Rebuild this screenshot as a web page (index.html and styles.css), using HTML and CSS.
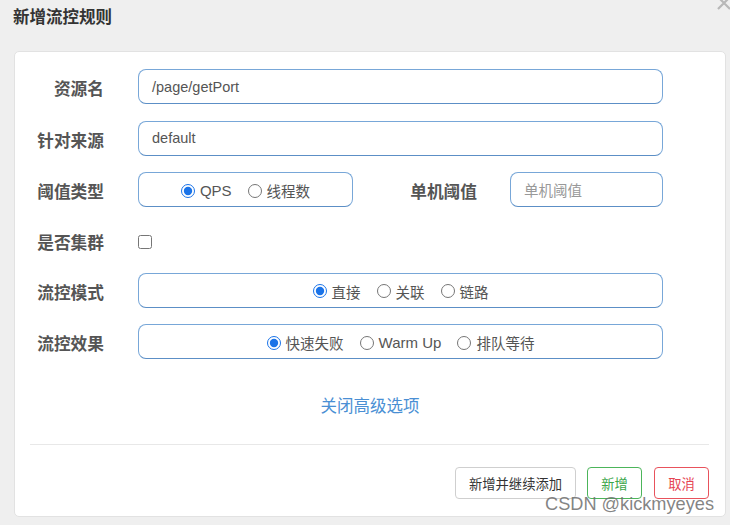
FILE: index.html
```html
<!DOCTYPE html>
<html lang="zh-CN">
<head>
<meta charset="utf-8">
<title>新增流控规则</title>
<link rel="stylesheet" href="styles.css">
</head>
<body>
<div class="dialog">
  <div class="header">
    <h1 class="title">新增流控规则</h1>
    <svg class="close" width="14" height="14" viewBox="0 0 14 14" aria-label="关闭">
      <path d="M1 1 L13 13 M13 1 L1 13" stroke="#b8b8b8" stroke-width="2.2" fill="none"/>
    </svg>
  </div>
  <div class="card">
    <div class="form">
      <div class="row">
        <label class="label">资源名</label>
        <div class="input wide"><span class="value">/page/getPort</span></div>
      </div>
      <div class="row">
        <label class="label">针对来源</label>
        <div class="input wide"><span class="value">default</span></div>
      </div>
      <div class="row">
        <label class="label">阈值类型</label>
        <div class="input group short">
          <label class="opt"><input type="radio" name="t" checked><span class="latin">QPS</span></label>
          <label class="opt"><input type="radio" name="t"><span>线程数</span></label>
        </div>
        <label class="label mid">单机阈值</label>
        <div class="input small"><span class="placeholder">单机阈值</span></div>
      </div>
      <div class="row check-row">
        <label class="label">是否集群</label>
        <input type="checkbox" class="check">
      </div>
      <div class="row">
        <label class="label">流控模式</label>
        <div class="input group wide">
          <label class="opt"><input type="radio" name="m" checked><span>直接</span></label>
          <label class="opt"><input type="radio" name="m"><span>关联</span></label>
          <label class="opt"><input type="radio" name="m"><span>链路</span></label>
        </div>
      </div>
      <div class="row">
        <label class="label">流控效果</label>
        <div class="input group wide">
          <label class="opt"><input type="radio" name="e" checked><span>快速失败</span></label>
          <label class="opt"><input type="radio" name="e"><span class="latin">Warm Up</span></label>
          <label class="opt"><input type="radio" name="e"><span>排队等待</span></label>
        </div>
      </div>
    </div>
    <div class="toggle"><a class="link">关闭高级选项</a></div>
    <div class="footer">
      <button class="btn">新增并继续添加</button>
      <button class="btn green">新增</button>
      <button class="btn red">取消</button>
    </div>
  </div>
  <div class="watermark">CSDN @kickmyeyes</div>
</div>
</body>
</html>
```
FILE: styles.css
```css
html, body {
  margin: 0;
  padding: 0;
}
body {
  background: #efefef;
  font-family: "Liberation Sans", "Noto Sans CJK SC", sans-serif;
  color: #333;
  width: 730px;
  height: 525px;
  overflow: hidden;
}
.dialog {
  position: relative;
  height: 525px;
}
.header {
  position: relative;
  height: 51px;
}
.title {
  margin: 0;
  padding: 5px 0 0 13px;
  font-family: "Noto Sans CJK SC", sans-serif;
  font-size: 16.5px;
  font-weight: bold;
  line-height: 22px;
  color: #333;
}
.close {
  position: absolute;
  right: -1px;
  top: -4px;
}
.card {
  margin: 0 4px 0 14px;
  height: 466px;
  box-sizing: border-box;
  background: #fff;
  border: 1px solid #e2e2e2;
  border-radius: 5px;
  display: flex;
  flex-direction: column;
}
.form {
  padding-top: 17px;
  display: flex;
  flex-direction: column;
  gap: 16.6px;
}
.row {
  display: flex;
  align-items: center;
  height: 35px;
}
.check-row {
  height: 32.5px;
}
.label {
  width: 89px;
  flex: none;
  text-align: right;
  font-family: "Noto Sans CJK SC", sans-serif;
  font-weight: bold;
  font-size: 16.7px;
  color: #555;
  margin-right: 34px;
  margin-top: 3px;
}
.label.mid {
  width: 124px;
  margin-right: 33px;
}
.input {
  height: 35px;
  box-sizing: border-box;
  border: 1px solid #78a7d8;
  border-bottom-color: #5c8fc6;
  border-radius: 8px;
  display: flex;
  align-items: center;
  padding: 0 13px;
  font-size: 14.5px;
  color: #555;
  flex: none;
}
.wide { width: 525px; }
.short { width: 215px; }
.small { width: 153px; }
.value {
  font-family: "Liberation Sans", sans-serif;
  color: #555;
}
.placeholder {
  font-family: "Noto Sans CJK SC", sans-serif;
  color: #999;
  font-size: 14.5px;
}
.group {
  justify-content: center;
  gap: 16px;
  padding-top: 2px;
}
.opt {
  display: flex;
  align-items: center;
  font-family: "Noto Sans CJK SC", sans-serif;
  font-size: 14.5px;
  color: #555;
}
.opt input {
  margin: 0 5px 0 0;
  width: 14px;
  height: 14px;
  accent-color: #1a73e8;
}
.opt .latin {
  font-family: "Liberation Sans", sans-serif;
  font-size: 15px;
}
.check {
  margin: 3px 0 0 0;
  width: 14px;
  height: 14px;
}
.toggle {
  margin-top: 34px;
  text-align: center;
}
.link {
  font-family: "Noto Sans CJK SC", sans-serif;
  font-size: 16.5px;
  color: #4a8fd4;
}
.footer {
  margin: 27px 16px 0 15px;
  padding-top: 22px;
  border-top: 1px solid #e8e8e8;
  display: flex;
  justify-content: flex-end;
  gap: 11px;
}
.btn {
  height: 32px;
  box-sizing: border-box;
  padding: 0 12px;
  background: #fff;
  border: 1px solid #cfcfcf;
  border-radius: 4px;
  font-family: "Noto Sans CJK SC", sans-serif;
  font-size: 13.3px;
  color: #333;
}
.btn:first-child { width: 121px; }
.btn.green {
  width: 55px;
  border-color: #4cb55a;
  color: #3aa64a;
}
.btn.red {
  width: 55px;
  border-color: #e8525c;
  color: #e64552;
  margin-left: 1px;
}
.watermark {
  position: absolute;
  left: 545px;
  top: 494px;
  font-family: "Liberation Sans", sans-serif;
  font-size: 18.2px;
  color: rgba(110, 110, 110, 0.85);
  white-space: nowrap;
}
```
